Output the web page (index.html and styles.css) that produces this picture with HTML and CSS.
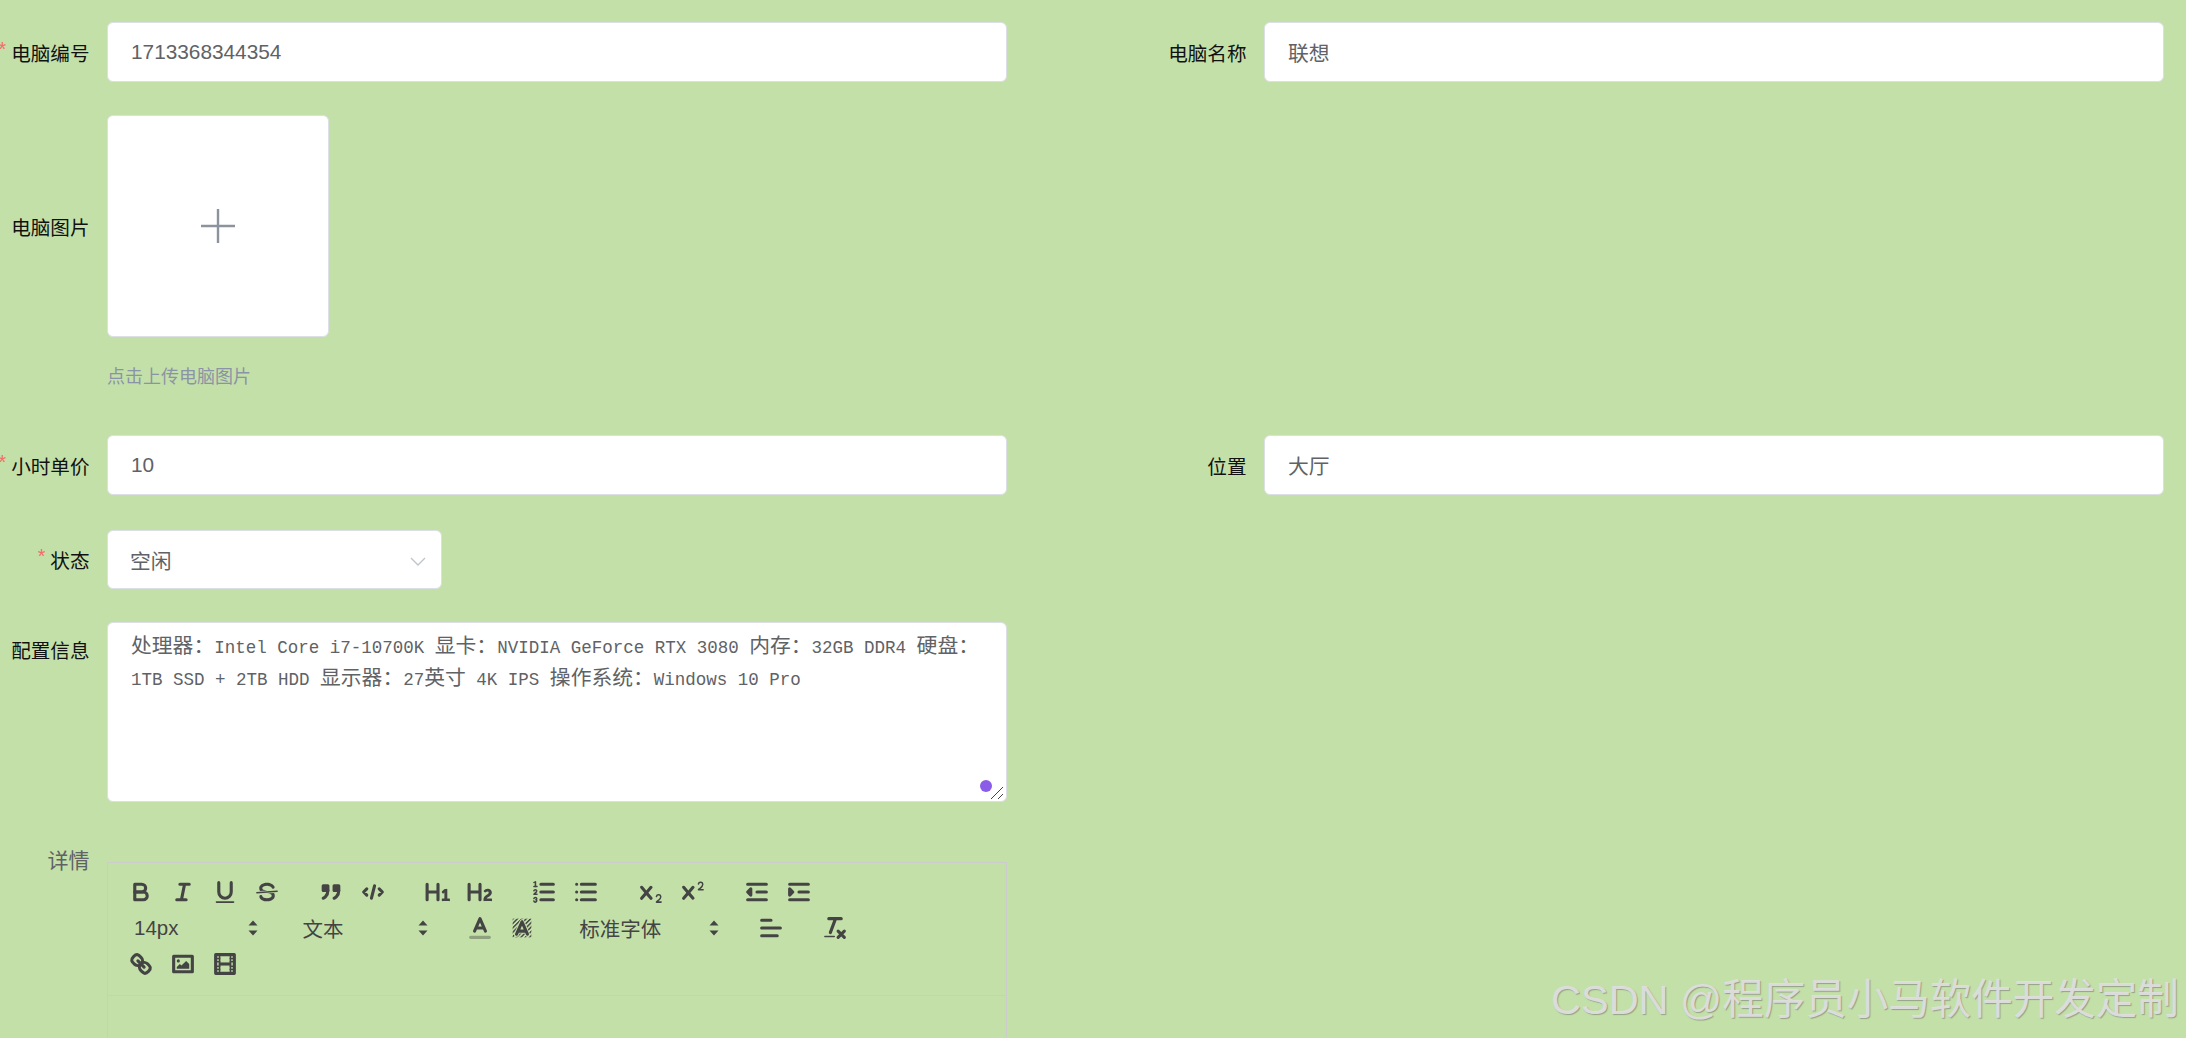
FILE: index.html
```html
<!DOCTYPE html>
<html>
	<head>
		<meta charset="UTF-8">
		<title>电脑信息</title>
		<link rel="stylesheet" href="styles.css">
	</head>
	<body>
		<form class="form">
			<div class="cols">
				<div class="item">
					<label class="label required">电脑编号</label>
					<input class="input" type="text" value="1713368344354">
				</div>
				<div class="item">
					<label class="label">电脑名称</label>
					<input class="input" type="text" value="联想">
				</div>
			</div>

			<div class="item item-upload">
				<label class="label">电脑图片</label>
				<div class="upload">
					<svg class="plus" viewBox="0 0 34 34"><path d="M0 17H34M17 0V34"/></svg>
				</div>
			</div>
			<div class="hint">点击上传电脑图片</div>

			<div class="cols">
				<div class="item">
					<label class="label required">小时单价</label>
					<input class="input" type="text" value="10">
				</div>
				<div class="item">
					<label class="label">位置</label>
					<input class="input" type="text" value="大厅">
				</div>
			</div>

			<div class="item item-select">
				<label class="label required">状态</label>
				<div class="select">
					<span>空闲</span>
					<svg class="chevron" viewBox="0 0 16 9"><path d="M1 1L8 8L15 1"/></svg>
				</div>
			</div>

			<div class="item item-area">
				<label class="label label-top">配置信息</label>
				<div class="textarea">
					<div class="area-line">处理器：<span class="en">Intel Core i7-10700K </span>显卡：<span class="en">NVIDIA GeForce RTX 3080 </span>内存：<span class="en">32GB DDR4 </span>硬盘：</div>
					<div class="area-line"><span class="en">1TB SSD + 2TB HDD </span>显示器：<span class="en">27</span>英寸<span class="en"> 4K IPS </span>操作系统：<span class="en">Windows 10 Pro</span></div>
					<i class="dot"></i>
					<svg class="grip" viewBox="0 0 14 14"><path d="M1 13L13 1M8 13L13 8"/></svg>
				</div>
			</div>

			<div class="item item-editor">
				<label class="label label-plain">详情</label>
				<div class="editor">
					<div class="toolbar">
						<div class="tb-row">
							<div class="tb-group">
								<button type="button"><svg viewBox="0 0 18 18"><path class="st" d="M5,4H9.5A2.5,2.5,0,0,1,12,6.5v0A2.5,2.5,0,0,1,9.5,9H5V4Z"/><path class="st" d="M5,9h5.5A2.5,2.5,0,0,1,13,11.5v0A2.5,2.5,0,0,1,10.5,14H5V9Z"/></svg></button>
								<button type="button"><svg viewBox="0 0 18 18"><path class="st" d="M7 4H13M5 14H11M8 14L10 4"/></svg></button>
								<button type="button"><svg viewBox="0 0 18 18"><path class="st" d="M5,3V9a4.012,4.012,0,0,0,4,4H9a4.012,4.012,0,0,0,4-4V3"/><rect class="fl" height="1" rx=".5" ry=".5" width="12" x="3" y="15"/></svg></button>
								<button type="button"><svg viewBox="0 0 18 18"><path class="st thin" d="M15.5 8.5L2.5 9.5"/><path class="fl" d="M9.007,8C6.542,7.791,6,7.519,6,6.5,6,5.792,7.283,5,9,5c1.571,0,2.765.679,2.969,1.309a1,1,0,0,0,1.9-.617C13.356,4.106,11.354,3,9,3,6.2,3,4,4.538,4,6.5a3.2,3.2,0,0,0,.5,1.843Z"/><path class="fl" d="M8.984,10C11.457,10.208,12,10.479,12,11.5c0,.708-1.283,1.5-3,1.5-1.571,0-2.765-.679-2.969-1.309a1,1,0,1,0-1.9.617C4.644,13.894,6.646,15,9,15c2.8,0,5-1.538,5-3.5a3.2,3.2,0,0,0-.5-1.843Z"/></svg></button>
							</div>
							<div class="tb-group">
								<button type="button"><svg viewBox="0 0 18 18"><rect class="fl st" height="3" width="3" x="4" y="5"/><rect class="fl st" height="3" width="3" x="11" y="5"/><path class="st" d="M7,8c0,4.031-3,5-3,5"/><path class="st" d="M14,8c0,4.031-3,5-3,5"/></svg></button>
								<button type="button"><svg viewBox="0 0 18 18"><path class="st" d="M5 7L3 9L5 11M13 7L15 9L13 11M10 5L8 13"/></svg></button>
							</div>
							<div class="tb-group">
								<button type="button"><svg viewBox="0 0 18 18"><path class="fl" d="M10,4V14a1,1,0,0,1-2,0V10H3v4a1,1,0,0,1-2,0V4A1,1,0,0,1,3,4V8H8V4a1,1,0,0,1,2,0Zm6.06787,9.209H14.98975V7.59863a.54085.54085,0,0,0-.605-.60547h-.62744a1.01119,1.01119,0,0,0-.748.29688L11.645,8.56641a.5435.5435,0,0,0-.022.8584l.28613.30762a.53861.53861,0,0,0,.84717.0332l.09912-.08789a1.2137,1.2137,0,0,0,.2417-.35254h.02246s-.01123.30859-.01123.60547V13.209H12.041a.54085.54085,0,0,0-.605.60547v.43945a.54085.54085,0,0,0,.605.60547h4.02686a.54085.54085,0,0,0,.605-.60547v-.43945A.54085.54085,0,0,0,16.06787,13.209Z"/></svg></button>
								<button type="button"><svg viewBox="0 0 18 18"><path class="fl" d="M16.73975,13.81445v.43945a.54085.54085,0,0,1-.605.60547H11.855a.58392.58392,0,0,1-.64893-.60547V14.0127c0-2.90527,3.39941-3.42187,3.39941-4.55469a.77675.77675,0,0,0-.84717-.78125,1.17684,1.17684,0,0,0-.83594.38477c-.2749.26367-.561.374-.85791.13184l-.4292-.34082c-.30811-.24219-.38525-.51758-.1543-.81445a2.97155,2.97155,0,0,1,2.45361-1.17676,2.45393,2.45393,0,0,1,2.68408,2.40918c0,2.45312-3.1792,2.92676-3.27832,3.93848h2.79443A.54085.54085,0,0,1,16.73975,13.81445ZM9,3A.99974.99974,0,0,0,8,4V8H3V4A1,1,0,0,0,1,4V14a1,1,0,0,0,2,0V10H8v4a1,1,0,0,0,2,0V4A.99974.99974,0,0,0,9,3Z"/></svg></button>
							</div>
							<div class="tb-group">
								<button type="button"><svg viewBox="0 0 18 18"><path class="st" d="M7 4H15M7 9H15M7 14H15"/><path class="st thin" d="M2.5 5.5H4.5"/><path class="fl" d="M3.5,6A0.5,0.5,0,0,1,3,5.5V3.085l-0.276.138A0.5,0.5,0,0,1,2.053,3c-0.124-.247-0.023-0.324.224-0.447l1-.5A0.5,0.5,0,0,1,4,2.5v3A0.5,0.5,0,0,1,3.5,6Z"/><path class="st thin" d="M4.5,10.5h-2c0-.234,1.85-1.076,1.85-2.234A0.959,0.959,0,0,0,2.5,8.156"/><path class="st thin" d="M2.5,14.846a0.959,0.959,0,0,0,1.85-.109A0.7,0.7,0,0,0,3.75,14a0.688,0.688,0,0,0,.6-0.736,0.959,0.959,0,0,0-1.85-.109"/></svg></button>
								<button type="button"><svg viewBox="0 0 18 18"><path class="st" d="M6 4H15M6 9H15M6 14H15M3 4V4M3 9V9M3 14V14"/></svg></button>
							</div>
							<div class="tb-group">
								<button type="button"><svg viewBox="0 0 18 18"><path class="fl" d="M15.5,15H13.861a3.858,3.858,0,0,0,1.914-2.975,1.8,1.8,0,0,0-1.6-1.751A1.921,1.921,0,0,0,12.021,11.7a0.50013,0.50013,0,1,0,.957.291h0a0.914,0.914,0,0,1,1.053-.725,0.81,0.81,0,0,1,.744.762c0,1.076-1.16971,1.86982-1.93971,2.43082A1.45639,1.45639,0,0,0,12,15.5a0.5,0.5,0,0,0,.5.5h3A0.5,0.5,0,0,0,15.5,15Z"/><path class="fl" d="M9.65,5.241a1,1,0,0,0-1.409.108L6,7.964,3.759,5.349A1,1,0,0,0,2.192,6.59178Q2.21541,6.6213,2.241,6.649L4.684,9.5,2.241,12.35A1,1,0,0,0,3.71,13.70722q0.02557-.02768.049-0.05722L6,11.036,8.241,13.65a1,1,0,1,0,1.567-1.24277Q9.78459,12.3777,9.759,12.35L7.316,9.5,9.759,6.651A1,1,0,0,0,9.65,5.241Z"/></svg></button>
								<button type="button"><svg viewBox="0 0 18 18"><path class="fl" d="M15.5,7H13.861a4.015,4.015,0,0,0,1.914-2.975,1.8,1.8,0,0,0-1.6-1.751A1.922,1.922,0,0,0,12.021,3.7a0.5,0.5,0,1,0,.957.291,0.917,0.917,0,0,1,1.053-.725,0.81,0.81,0,0,1,.744.762c0,1.077-1.164,1.925-1.934,2.486A1.423,1.423,0,0,0,12,7.5a0.5,0.5,0,0,0,.5.5h3A0.5,0.5,0,0,0,15.5,7Z"/><path class="fl" d="M9.651,5.241a1,1,0,0,0-1.41.108L6,7.964,3.759,5.349a1,1,0,1,0-1.519,1.3L4.683,9.5,2.241,12.35a1,1,0,1,0,1.519,1.3L6,11.036,8.241,13.65a1,1,0,0,0,1.519-1.3L7.317,9.5,9.759,6.651A1,1,0,0,0,9.651,5.241Z"/></svg></button>
							</div>
							<div class="tb-group">
								<button type="button"><svg viewBox="0 0 18 18"><path class="st" d="M3 14H15M3 4H15M9 9H15"/><path class="st fl" d="M5 7V11L3 9Z"/></svg></button>
								<button type="button"><svg viewBox="0 0 18 18"><path class="st" d="M3 14H15M3 4H15M9 9H15"/><path class="st fl" d="M3 7V11L5 9Z"/></svg></button>
							</div>
						</div>
						<div class="tb-row">
							<div class="tb-group">
								<div class="picker picker-size">14px
									<svg class="updown" viewBox="0 0 10 16"><path d="M5 0.5L9.5 5.5H0.5ZM5 15.5L0.5 10.5H9.5Z"/></svg>
								</div>
							</div>
							<div class="tb-group">
								<div class="picker picker-header">文本
									<svg class="updown" viewBox="0 0 10 16"><path d="M5 0.5L9.5 5.5H0.5ZM5 15.5L0.5 10.5H9.5Z"/></svg>
								</div>
							</div>
							<div class="tb-group">
								<button type="button"><svg viewBox="0 0 18 18"><path class="st faint" d="M3 15H15"/><path class="st" d="M5.5 11L9 3L12.5 11M11.63 9H6.38"/></svg></button>
								<button type="button"><svg viewBox="0 0 18 18"><defs><pattern id="hatch" width="2" height="2" patternUnits="userSpaceOnUse" patternTransform="rotate(45)"><rect width="0.9" height="2" fill="#444"/></pattern></defs><rect x="3" y="3" width="12" height="12" fill="url(#hatch)"/><path class="halo" d="M5.5 13L9 5L12.5 13M11.63 11H6.38"/><path class="st" d="M5.5 13L9 5L12.5 13M11.63 11H6.38"/></svg></button>
							</div>
							<div class="tb-group">
								<div class="picker picker-font">标准字体
									<svg class="updown" viewBox="0 0 10 16"><path d="M5 0.5L9.5 5.5H0.5ZM5 15.5L0.5 10.5H9.5Z"/></svg>
								</div>
							</div>
							<div class="tb-group">
								<button type="button"><svg viewBox="0 0 18 18"><path class="st" d="M3 9H15M3 14H13M3 4H9"/></svg></button>
							</div>
							<div class="tb-group">
								<button type="button"><svg viewBox="0 0 18 18"><path class="st" d="M5 3H13M6 12L9.35 3M11 11L15 15M15 11L11 15"/><rect class="fl" height="1" rx=".5" ry=".5" width="7" x="2" y="14"/></svg></button>
							</div>
						</div>
						<div class="tb-row">
							<div class="tb-group">
								<button type="button"><svg viewBox="0 0 18 18"><path class="st" d="M7 7L11 11"/><path class="st" d="M8.9,4.577a3.476,3.476,0,0,1,.36,4.679A3.476,3.476,0,0,1,4.577,8.9C3.185,7.5,2.035,6.4,4.217,4.217S7.5,3.185,8.9,4.577Z"/><path class="st" d="M13.423,9.1a3.476,3.476,0,0,0-4.679-.36,3.476,3.476,0,0,0,.36,4.679c1.392,1.392,2.5,2.542,4.679.36S14.815,10.5,13.423,9.1Z"/></svg></button>
								<button type="button"><svg viewBox="0 0 18 18"><rect class="st" height="10" width="12" x="3" y="4"/><circle class="fl" cx="6" cy="7" r="1"/><path class="fl" d="M5 12V11L7 9L8 10L11 7L13 9V12Z"/></svg></button>
								<button type="button"><svg viewBox="0 0 18 18"><rect class="st" height="12" width="12" x="3" y="3"/><rect class="fl" height="12" width="1" x="5" y="3"/><rect class="fl" height="12" width="1" x="12" y="3"/><rect class="fl" height="2" width="8" x="5" y="8"/><rect class="fl" height="1" width="3" x="3" y="5"/><rect class="fl" height="1" width="3" x="3" y="7"/><rect class="fl" height="1" width="3" x="3" y="10"/><rect class="fl" height="1" width="3" x="3" y="12"/><rect class="fl" height="1" width="3" x="12" y="5"/><rect class="fl" height="1" width="3" x="12" y="7"/><rect class="fl" height="1" width="3" x="12" y="10"/><rect class="fl" height="1" width="3" x="12" y="12"/></svg></button>
							</div>
						</div>
					</div>
					<div class="editor-body"></div>
				</div>
			</div>
		</form>
		<div class="watermark">CSDN @程序员小马软件开发定制</div>
	</body>
</html>
```

FILE: styles.css
```css
*{
	margin: 0px;
	padding: 0px;
	box-sizing: border-box;
}
html,body{
	height: 1038px;
	overflow: hidden;
}
body{
	background: #c4e0a9;
	font-family: "Liberation Sans", "Noto Sans CJK SC", sans-serif;
	position: relative;
}
.form{
	padding-top: 22px;
	padding-right: 22px;
}
.cols{
	display: grid;
	grid-template-columns: 1007px 1007px;
	column-gap: 150px;
}
.item{
	display: flex;
	align-items: center;
}
.label{
	flex: none;
	width: 107px;
	padding-right: 17.5px;
	display: flex;
	justify-content: flex-end;
	font-size: 19.6px;
	color: #111;
	white-space: nowrap;
}
.required::before{
	content: "*";
	color: #f56c6c;
	margin-right: 5px;
}
.input{
	flex: 1;
	min-width: 0;
	height: 60px;
	padding: 0 23px;
	background: #fff;
	border: 1px solid #dcdfe6;
	border-radius: 6px;
	font-family: inherit;
	font-size: 20.8px;
	color: #606266;
	outline: none;
}
.item-upload{
	margin-top: 33px;
}
.upload{
	width: 222px;
	height: 222px;
	background: #fff;
	border: 1px solid #dcdfe6;
	border-radius: 6px;
	display: flex;
	align-items: center;
	justify-content: center;
}
.plus{
	width: 34px;
	height: 34px;
}
.plus path{
	fill: none;
	stroke: #8c939d;
	stroke-width: 2.4;
}
.hint{
	margin-left: 107px;
	height: 98px;
	padding-top: 28px;
	font-size: 18px;
	line-height: 24px;
	color: #8b93a6;
}
.item-select{
	margin-top: 35px;
}
.select{
	width: 335px;
	height: 59px;
	padding: 0 22px;
	background: #fff;
	border: 1px solid #dcdfe6;
	border-radius: 6px;
	display: flex;
	align-items: center;
	justify-content: space-between;
	font-size: 20.8px;
	color: #606266;
}
.chevron{
	width: 16px;
	height: 9px;
	margin-right: -7px;
	margin-top: 3px;
}
.chevron path{
	fill: none;
	stroke: #c0c4cc;
	stroke-width: 1.4;
}
.item-area{
	margin-top: 33px;
	align-items: flex-start;
}
.label-top{
	padding-top: 13px;
}
.textarea{
	width: 900px;
	height: 180px;
	padding: 7px 23px;
	background: #fff;
	border: 1px solid #dcdfe6;
	border-radius: 6px;
	font-size: 20.8px;
	line-height: 32px;
	color: #606266;
	position: relative;
}
.area-line{
	height: 32px;
	white-space: pre;
}
.en{
	font-family: "Liberation Mono", monospace;
	font-size: 17.5px;
}
.dot{
	position: absolute;
	right: 14px;
	bottom: 9px;
	width: 12px;
	height: 12px;
	border-radius: 50%;
	background: #8b5ce8;
}
.grip{
	position: absolute;
	right: 2px;
	bottom: 1px;
	width: 14px;
	height: 14px;
}
.grip path{
	fill: none;
	stroke: #444;
	stroke-width: 1;
}
.item-editor{
	margin-top: 39px;
	align-items: flex-start;
}
.label-plain{
	font-size: 21px;
	line-height: 40px;
	color: #606266;
}
.editor{
	width: 900px;
	margin-top: 21px;
	border: 1px solid #ccc;
}
.toolbar{
	height: 133px;
	padding: 10.5px 0 0 12px;
	border-bottom: 1px solid #ccc;
}
.tb-row{
	display: flex;
	height: 36px;
}
.tb-group{
	display: flex;
	align-items: center;
	margin-right: 22.4px;
}
.tb-group button{
	width: 42px;
	height: 36px;
	border: none;
	background: none;
	display: flex;
	align-items: center;
	justify-content: center;
}
.tb-group svg{
	width: 28px;
	height: 28px;
	display: block;
}
.st{
	fill: none;
	stroke: #444;
	stroke-width: 2;
	stroke-linecap: round;
	stroke-linejoin: round;
}
.halo{
	fill: none;
	stroke: #c4e0a9;
	stroke-width: 3.2;
	stroke-linecap: round;
	stroke-linejoin: round;
}
.thin{
	stroke-width: 1;
}
.faint{
	opacity: 0.4;
}
.fl{
	fill: #444;
}
.picker{
	height: 36px;
	padding-left: 14px;
	display: flex;
	align-items: center;
	justify-content: space-between;
	font-size: 20.5px;
	color: #444;
	position: relative;
}
.picker-size{
	width: 146px;
}
.picker-header{
	width: 148px;
}
.picker-font{
	width: 162px;
}
.tb-group .updown{
	width: 10px;
	height: 16px;
	margin-right: 8px;
}
.updown path{
	fill: #444;
}
.editor-body{
	height: 220px;
}
.watermark{
	position: absolute;
	left: 1551px;
	top: 972px;
	font-size: 41.5px;
	line-height: 56px;
	color: rgba(224,224,224,.95);
	text-shadow: 1px 1px 1px rgba(110,110,110,.55);
	white-space: nowrap;
}
```
